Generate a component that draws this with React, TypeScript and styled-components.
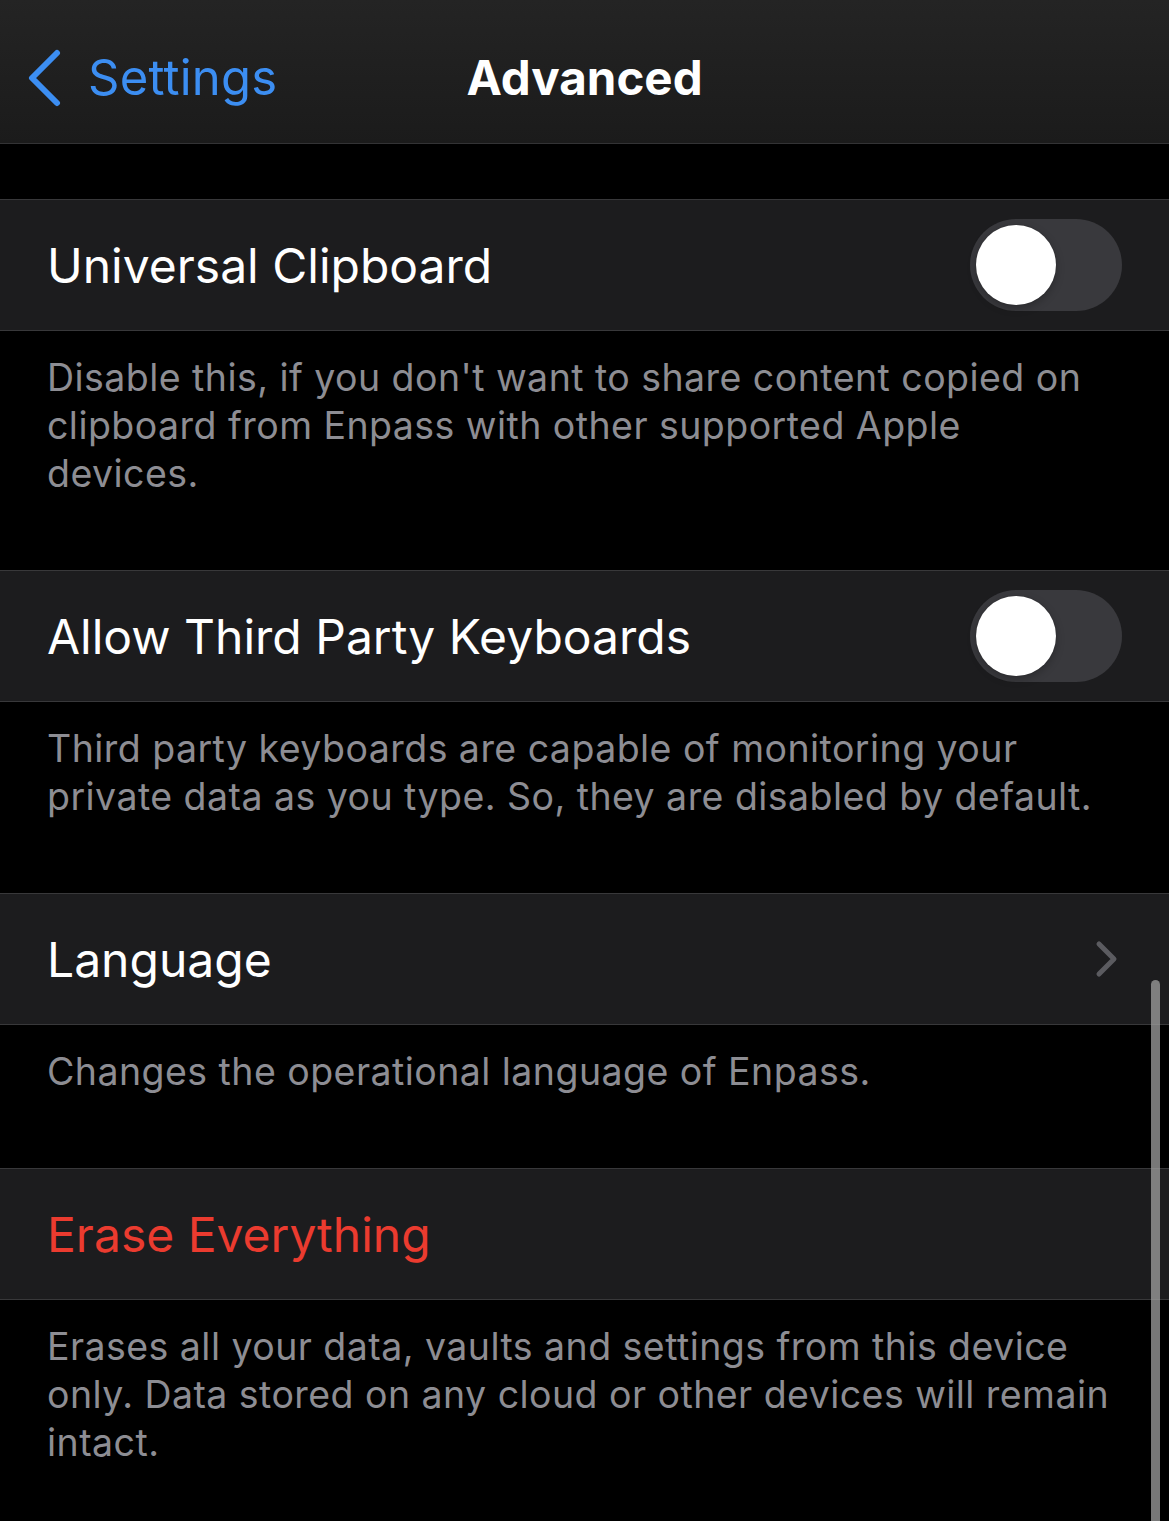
import React, { FC } from 'react';
import styled, { createGlobalStyle } from 'styled-components';

const GlobalStyle = createGlobalStyle`
  html, body {
    margin: 0;
    padding: 0;
    background: #000;
  }
  body {
    font-family: Inter, "Noto Sans", "Liberation Sans", sans-serif;
    -webkit-font-smoothing: antialiased;
  }
`;

const Screen = styled.div`
  position: relative;
  width: 1169px;
  height: 1521px;
  overflow: hidden;
  background: #000;
  color: #fff;
`;

const NavBar = styled.header`
  position: relative;
  height: 144px;
  box-sizing: border-box;
  padding-top: 12px;
  display: flex;
  align-items: center;
  justify-content: center;
  background: linear-gradient(180deg, #242424 0%, #1b1b1b 100%);
  border-bottom: 1px solid #333335;
`;

const BackButton = styled.div`
  position: absolute;
  left: 26px;
  top: 12px;
  bottom: 0;
  display: flex;
  align-items: center;
  gap: 26px;
  color: #3c8ef2;
  font-size: 49px;
  letter-spacing: 0.2px;
`;

const Title = styled.h1`
  margin: 0;
  font-size: 47.5px;
  font-weight: 700;
`;

const Spacer = styled.div`
  height: 55px;
  border-bottom: 1px solid #38383a;
`;

const Row = styled.div`
  height: 130px;
  display: flex;
  align-items: center;
  justify-content: space-between;
  padding: 0 48px 0 47px;
  background: #1c1c1e;
  border-bottom: 1px solid #38383a;
`;

const Label = styled.span<{ $danger?: boolean }>`
  font-size: 48px;
  color: ${({ $danger }) => ($danger ? '#eb3b2f' : '#fff')};
`;

const Footer = styled.p`
  margin: 0;
  padding: 23px 54px 72px 47px;
  font-size: 37.5px;
  line-height: 48px;
  color: #8d8d93;
  letter-spacing: 0.45px;
  border-bottom: 1px solid #38383a;

  &:last-child {
    border-bottom: none;
  }
`;

const Track = styled.div`
  width: 152px;
  height: 92px;
  border-radius: 46px;
  background: #39393d;
  padding: 6px;
  box-sizing: border-box;
  margin-right: -1px;
`;

const Knob = styled.div`
  width: 80px;
  height: 80px;
  border-radius: 50%;
  background: #fff;
  box-shadow: 0 3px 8px rgba(0, 0, 0, 0.25), 0 0 0 1px rgba(0, 0, 0, 0.04);
`;

const ScrollIndicator = styled.div`
  position: absolute;
  left: 1151px;
  top: 980px;
  width: 9px;
  height: 560px;
  border-radius: 5px;
  background: rgba(160, 160, 160, 0.75);
`;

const Switch: FC = () => (
  <Track>
    <Knob />
  </Track>
);

const Chevron: FC = () => (
  <svg width="24" height="38" viewBox="0 0 24 38" style={{ marginRight: 2 }}>
    <path d="M4 4 L19 19 L4 34" fill="none" stroke="#5b5b60" strokeWidth="5" strokeLinecap="round" strokeLinejoin="round" />
  </svg>
);

const BackChevron: FC = () => (
  <svg width="36" height="58" viewBox="0 0 36 58">
    <path d="M31 4 L6 29 L31 54" fill="none" stroke="#3c8ef2" strokeWidth="6" strokeLinecap="round" strokeLinejoin="round" />
  </svg>
);

const sections = [
  {
    label: 'Universal Clipboard',
    control: 'switch',
    footer: "Disable this, if you don't want to share content copied on clipboard from Enpass with other supported Apple devices.",
  },
  {
    label: 'Allow Third Party Keyboards',
    control: 'switch',
    footer: 'Third party keyboards are capable of monitoring your private data as you type. So, they are disabled by default.',
  },
  {
    label: 'Language',
    control: 'chevron',
    footer: 'Changes the operational language of Enpass.',
  },
  {
    label: 'Erase Everything',
    control: 'none',
    danger: true,
    footer: 'Erases all your data, vaults and settings from this device only. Data stored on any cloud or other devices will remain intact.',
  },
];

const App: FC = () => (
  <Screen>
    <GlobalStyle />
    <NavBar>
      <BackButton>
        <BackChevron />
        <span>Settings</span>
      </BackButton>
      <Title>Advanced</Title>
    </NavBar>
    <Spacer />
    {sections.map((s) => (
      <React.Fragment key={s.label}>
        <Row>
          <Label $danger={s.danger}>{s.label}</Label>
          {s.control === 'switch' && <Switch />}
          {s.control === 'chevron' && <Chevron />}
        </Row>
        <Footer>{s.footer}</Footer>
      </React.Fragment>
    ))}
    <ScrollIndicator />
  </Screen>
);

export default App;
